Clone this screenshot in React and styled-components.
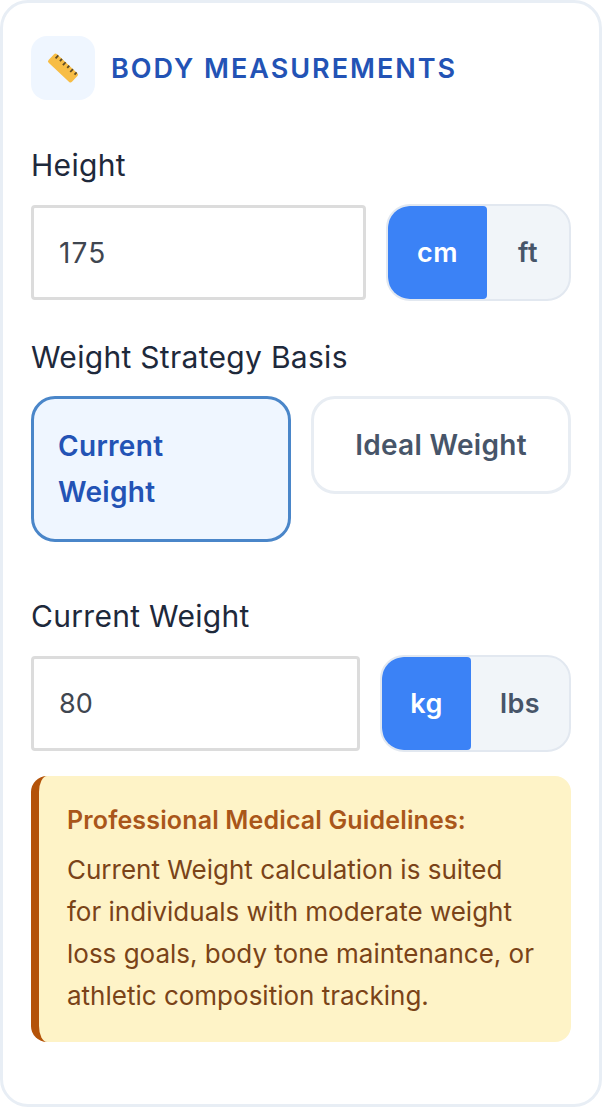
import { useState } from 'react';
import styled, { createGlobalStyle } from 'styled-components';

const GlobalStyle = createGlobalStyle`
  * {
    box-sizing: border-box;
  }

  body {
    margin: 0;
    background: #ffffff;
    font-family: Inter, "Noto Sans", sans-serif;
  }
`;

const Card = styled.section`
  width: 602px;
  height: 1107px;
  padding: 33px 28px 0;
  background: #ffffff;
  border: 3px solid #e8eef5;
  border-radius: 28px;
`;

const Header = styled.header`
  display: flex;
  align-items: center;
  gap: 16px;
  margin-bottom: 47px;
`;

const IconTile = styled.div`
  width: 64px;
  height: 64px;
  display: flex;
  align-items: center;
  justify-content: center;
  background: #eff6ff;
  border-radius: 16px;
`;

const Title = styled.h2`
  margin: 0;
  font-size: 27px;
  font-weight: 600;
  letter-spacing: 2px;
  color: #2353b5;
`;

const Label = styled.label`
  display: block;
  margin-bottom: 21px;
  font-size: 30px;
  line-height: 36px;
  font-weight: 400;
  letter-spacing: 0.3px;
  color: #1e293b;
`;

const FieldRow = styled.div`
  display: flex;
  align-items: center;
  gap: 20px;
  margin-bottom: ${(p) => p.$gap}px;
`;

const ValueInput = styled.input`
  flex: 1;
  min-width: 0;
  height: 95px;
  padding: 0 25px;
  font-family: inherit;
  font-size: ${(p) => p.$size}px;
  letter-spacing: ${(p) => p.$tracking}px;
  color: #3f4650;
  background: #ffffff;
  border: 3px solid #dcdcdc;
  border-radius: 4px;
  outline: none;
`;

const Toggle = styled.div`
  display: flex;
  height: 97px;
  background: #f1f5f9;
  border: 2px solid #e2e8f0;
  border-radius: 24px;
  overflow: hidden;
`;

const ToggleOption = styled.button`
  width: ${(p) => p.$width}px;
  font-family: inherit;
  font-size: 27px;
  font-weight: 600;
  letter-spacing: 0.5px;
  color: ${(p) => (p.$active ? '#ffffff' : '#475569')};
  background: ${(p) => (p.$active ? '#3b82f6' : 'transparent')};
  border: none;
  border-radius: ${(p) => (p.$active ? '20px 4px 4px 20px' : '0')};
  padding: 0;
`;

const StrategyRow = styled.div`
  display: grid;
  grid-template-columns: 1fr 1fr;
  align-items: start;
  gap: 20px;
  margin-bottom: 56px;
`;

const StrategyButton = styled.button`
  padding: ${(p) => (p.$active ? '24px 60px 24px 24px' : '23px 20px')};
  font-family: inherit;
  font-size: 28px;
  line-height: 46px;
  font-weight: 600;
  letter-spacing: 0.3px;
  text-align: ${(p) => (p.$active ? 'left' : 'center')};
  color: ${(p) => (p.$active ? '#2353b5' : '#475569')};
  background: ${(p) => (p.$active ? '#eff6ff' : '#ffffff')};
  border: 3px solid ${(p) => (p.$active ? '#4a86c9' : '#e8edf3')};
  border-radius: 24px;
`;

const Notice = styled.aside`
  padding: 27px 32px 25px 28px;
  background: #fef3c7;
  border-left: 8px solid #b45309;
  border-radius: 16px;
`;

const NoticeTitle = styled.div`
  margin-bottom: 12px;
  font-size: 25px;
  line-height: 34px;
  font-weight: 600;
  letter-spacing: 0.15px;
  color: #a9561a;
`;

const NoticeText = styled.p`
  margin: 0;
  font-size: 26px;
  line-height: 42px;
  color: #7a4318;
`;

// small ruler drawn on a diagonal, same shape as the emoji in the app
const RulerIcon = () => (
  <svg width="32" height="32" viewBox="0 0 32 32" aria-hidden="true">
    <g transform="rotate(43 16 16)">
      <rect x="0" y="10" width="32" height="12" rx="2" fill="#f7bd45" />
      <path
        d="M4 10v4M9 10v3M14 10v4M19 10v3M24 10v4M29 10v3"
        stroke="#5d4a26"
        strokeWidth="1.8"
        fill="none"
      />
    </g>
  </svg>
);

const UnitToggle = ({ options, value, onChange }) => (
  <Toggle>
    {options.map((option) => (
      <ToggleOption
        key={option.unit}
        type="button"
        $width={option.width}
        $active={value === option.unit}
        onClick={() => onChange(option.unit)}
      >
        {option.unit}
      </ToggleOption>
    ))}
  </Toggle>
);

export default function App() {
  const [heightUnit, setHeightUnit] = useState('cm');
  const [weightUnit, setWeightUnit] = useState('kg');
  const [basis, setBasis] = useState('current');

  return (
    <>
      <GlobalStyle />
      <Card>
        <Header>
          <IconTile>
            <RulerIcon />
          </IconTile>
          <Title>BODY MEASUREMENTS</Title>
        </Header>

        <Label>Height</Label>
        <FieldRow $gap={38}>
          <ValueInput defaultValue="175" $size={28} $tracking={1.2} />
          <UnitToggle
            options={[
              { unit: 'cm', width: 99 },
              { unit: 'ft', width: 82 },
            ]}
            value={heightUnit}
            onChange={setHeightUnit}
          />
        </FieldRow>

        <Label>Weight Strategy Basis</Label>
        <StrategyRow>
          <StrategyButton
            type="button"
            $active={basis === 'current'}
            onClick={() => setBasis('current')}
          >
            Current Weight
          </StrategyButton>
          <StrategyButton
            type="button"
            $active={basis === 'ideal'}
            onClick={() => setBasis('ideal')}
          >
            Ideal Weight
          </StrategyButton>
        </StrategyRow>

        <Label>Current Weight</Label>
        <FieldRow $gap={24}>
          <ValueInput defaultValue="80" $size={27} $tracking={0} />
          <UnitToggle
            options={[
              { unit: 'kg', width: 89 },
              { unit: 'lbs', width: 98 },
            ]}
            value={weightUnit}
            onChange={setWeightUnit}
          />
        </FieldRow>

        <Notice>
          <NoticeTitle>Professional Medical Guidelines:</NoticeTitle>
          <NoticeText>
            Current Weight calculation is suited for individuals with moderate
            weight loss goals, body tone maintenance, or athletic composition
            tracking.
          </NoticeText>
        </Notice>
      </Card>
    </>
  );
}
